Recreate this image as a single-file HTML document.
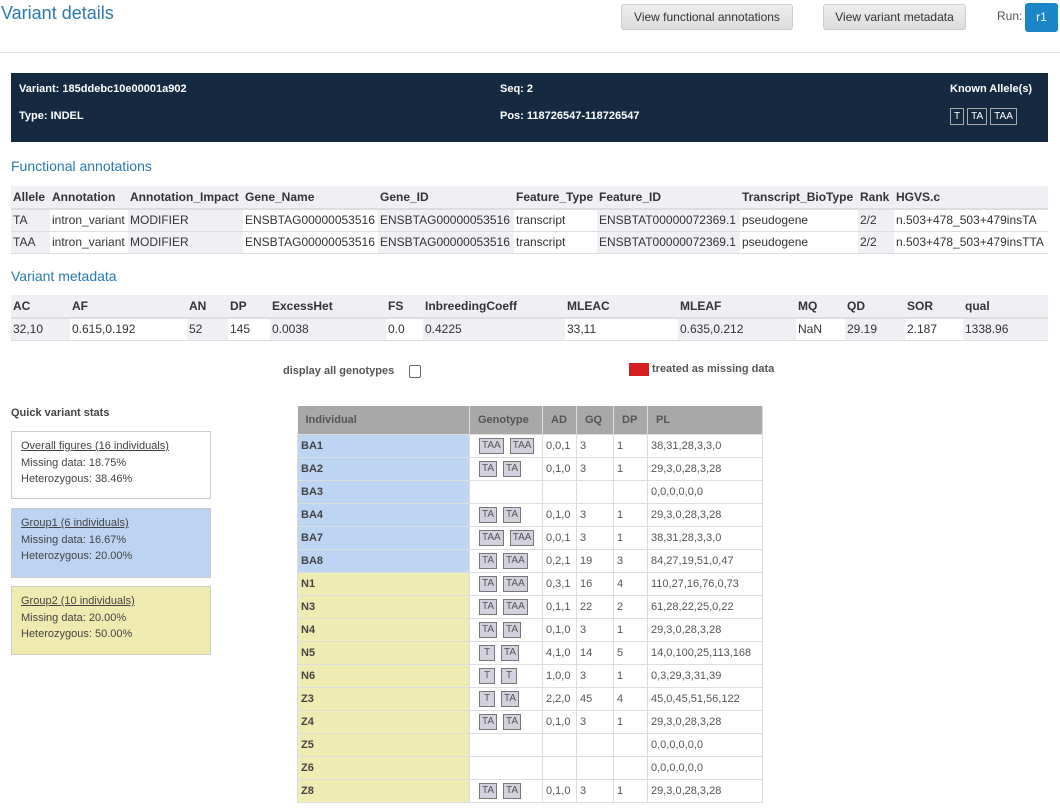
<!DOCTYPE html>
<html><head><meta charset="utf-8">
<style>
*{box-sizing:border-box;margin:0;padding:0}
body{width:1060px;height:809px;position:relative;background:#fff;font-family:"Liberation Sans",Arial,sans-serif;color:#333;overflow:hidden}
.a{position:absolute}
.btn{position:absolute;top:4px;height:26px;background:linear-gradient(#eee,#dcdcdc);border:1px solid #ccc;border-radius:3px;font-size:12px;color:#333;line-height:24px;text-align:center}
table{border-collapse:collapse;table-layout:fixed;position:absolute;font-size:12px}
td,th{white-space:nowrap;overflow:hidden;text-align:left;padding:0 2px}
.t1 th{font-weight:bold;height:23px;background:#efeff4;border-bottom:2px solid #ddd}
.t1 td{height:22px;border-bottom:1px solid #ddd}
.t1 td.g{background:#efeff4}
.dark{position:absolute;left:11px;top:73px;width:1037px;height:69px;background:#152a40;color:#fff;font-size:11px;font-weight:bold}
.dark span{position:absolute}
.al{display:inline-block;border:1px solid #aaa;height:17px;line-height:15px;padding:0 3px;margin-right:3px;font-weight:normal;font-size:10px}
h2{position:absolute;font-weight:normal;font-size:14px;color:#2a7ab0}
.box{position:absolute;left:11px;width:200px;border:1px solid #ccc;font-size:11px;color:#444;padding:6px 0 0 9px;line-height:16.5px}
.box u{color:#444}
.gt{position:absolute;left:297px;top:406px;width:465px;font-size:11px}
.gt th{background:#a8a8a8;color:#555;height:28px;font-weight:bold;padding-left:8px;border-right:1px solid #ddd;font-size:11px}
.gt td{height:23px;border:1px solid #ddd;color:#555;padding-left:3px;font-size:11px}
.gt td.i{font-weight:bold;color:#444;padding-left:3px}
.b td.i{background:#bdd5f2}
.y td.i{background:#efecb3}
.c{display:inline-block;height:16px;line-height:14px;border:1px solid #777;background:#d2d2de;font-size:10px;color:#555;padding:0 2px;margin-left:6px;vertical-align:middle;min-width:16px;text-align:center}
</style></head><body>
<div class="a" style="left:1px;top:3px;font-size:18px;color:#2a7ab0">Variant details</div>
<div class="btn" style="left:621px;width:172px">View functional annotations</div>
<div class="btn" style="left:823px;width:143px">View variant metadata</div>
<div class="a" style="left:997px;top:9px;font-size:12px;color:#555">Run:</div>
<div class="a" style="left:1025px;top:3px;width:33px;height:29px;background:#1a86c8;border-radius:3px;color:#fff;font-size:12px;text-align:center;line-height:29px">r1</div>
<div class="a" style="left:0;top:52px;width:1060px;height:1px;background:#e5e5e5"></div>

<div class="dark">
<span style="left:8px;top:10px">Variant: 185ddebc10e00001a902</span>
<span style="left:489px;top:10px">Seq: 2</span>
<span style="left:939px;top:10px">Known Allele(s)</span>
<span style="left:8px;top:37px">Type: INDEL</span>
<span style="left:489px;top:37px">Pos: 118726547-118726547</span>
<span style="left:939px;top:35px"><span class="al" style="position:static">T</span><span class="al" style="position:static">TA</span><span class="al" style="position:static">TAA</span></span>
</div>

<h2 style="left:11px;top:158px">Functional annotations</h2>
<table class="t1" style="left:11px;top:186px;width:1037px">
<colgroup><col style="width:39px"><col style="width:78px"><col style="width:115px"><col style="width:135px"><col style="width:136px"><col style="width:83px"><col style="width:143px"><col style="width:118px"><col style="width:36px"><col style="width:154px"></colgroup>
<tr><th>Allele</th><th>Annotation</th><th>Annotation_Impact</th><th>Gene_Name</th><th>Gene_ID</th><th>Feature_Type</th><th>Feature_ID</th><th>Transcript_BioType</th><th>Rank</th><th>HGVS.c</th></tr>
<tr><td class="g">TA</td><td>intron_variant</td><td class="g">MODIFIER</td><td>ENSBTAG00000053516</td><td class="g">ENSBTAG00000053516</td><td>transcript</td><td class="g">ENSBTAT00000072369.1</td><td>pseudogene</td><td class="g">2/2</td><td>n.503+478_503+479insTA</td></tr>
<tr><td class="g">TAA</td><td>intron_variant</td><td class="g">MODIFIER</td><td>ENSBTAG00000053516</td><td class="g">ENSBTAG00000053516</td><td>transcript</td><td class="g">ENSBTAT00000072369.1</td><td>pseudogene</td><td class="g">2/2</td><td>n.503+478_503+479insTTA</td></tr>
</table>

<h2 style="left:11px;top:268px">Variant metadata</h2>
<table class="t1" style="left:11px;top:295px;width:1037px">
<colgroup><col style="width:59px"><col style="width:117px"><col style="width:41px"><col style="width:42px"><col style="width:116px"><col style="width:37px"><col style="width:142px"><col style="width:113px"><col style="width:118px"><col style="width:49px"><col style="width:60px"><col style="width:58px"><col style="width:85px"></colgroup>
<tr><th>AC</th><th>AF</th><th>AN</th><th>DP</th><th>ExcessHet</th><th>FS</th><th>InbreedingCoeff</th><th>MLEAC</th><th>MLEAF</th><th>MQ</th><th>QD</th><th>SOR</th><th>qual</th></tr>
<tr><td class="g">32,10</td><td>0.615,0.192</td><td class="g">52</td><td>145</td><td class="g">0.0038</td><td>0.0</td><td class="g">0.4225</td><td>33,11</td><td class="g">0.635,0.212</td><td>NaN</td><td class="g">29.19</td><td>2.187</td><td class="g">1338.96</td></tr>
</table>

<div class="a" style="left:283px;top:365px;font-size:11px;font-weight:bold;color:#555">display all genotypes</div>
<div class="a" style="left:409px;top:365px;width:12px;height:13px;border:1px solid #666;border-radius:2px"></div>
<div class="a" style="left:629px;top:363px;width:20px;height:13px;background:#d42020"></div>
<div class="a" style="left:652px;top:363px;font-size:11px;font-weight:bold;color:#555">treated as missing data</div>

<div class="a" style="left:11px;top:407px;font-size:11px;font-weight:bold;color:#444">Quick variant stats</div>
<div class="box" style="top:431px;height:68px"><u>Overall figures (16 individuals)</u><br>Missing data: 18.75%<br>Heterozygous: 38.46%</div>
<div class="box" style="top:508px;height:70px;background:#bcd4f1"><u>Group1 (6 individuals)</u><br>Missing data: 16.67%<br>Heterozygous: 20.00%</div>
<div class="box" style="top:586px;height:69px;background:#efebb0"><u>Group2 (10 individuals)</u><br>Missing data: 20.00%<br>Heterozygous: 50.00%</div>

<table class="gt">
<colgroup><col style="width:172px"><col style="width:73px"><col style="width:34px"><col style="width:37px"><col style="width:34px"><col style="width:115px"></colgroup>
<tr><th>Individual</th><th>Genotype</th><th>AD</th><th>GQ</th><th>DP</th><th>PL</th></tr>
<tr class="b"><td class="i">BA1</td><td><span class="c">TAA</span><span class="c">TAA</span></td><td>0,0,1</td><td>3</td><td>1</td><td>38,31,28,3,3,0</td></tr>
<tr class="b"><td class="i">BA2</td><td><span class="c">TA</span><span class="c">TA</span></td><td>0,1,0</td><td>3</td><td>1</td><td>29,3,0,28,3,28</td></tr>
<tr class="b"><td class="i">BA3</td><td></td><td></td><td></td><td></td><td>0,0,0,0,0,0</td></tr>
<tr class="b"><td class="i">BA4</td><td><span class="c">TA</span><span class="c">TA</span></td><td>0,1,0</td><td>3</td><td>1</td><td>29,3,0,28,3,28</td></tr>
<tr class="b"><td class="i">BA7</td><td><span class="c">TAA</span><span class="c">TAA</span></td><td>0,0,1</td><td>3</td><td>1</td><td>38,31,28,3,3,0</td></tr>
<tr class="b"><td class="i">BA8</td><td><span class="c">TA</span><span class="c">TAA</span></td><td>0,2,1</td><td>19</td><td>3</td><td>84,27,19,51,0,47</td></tr>
<tr class="y"><td class="i">N1</td><td><span class="c">TA</span><span class="c">TAA</span></td><td>0,3,1</td><td>16</td><td>4</td><td>110,27,16,76,0,73</td></tr>
<tr class="y"><td class="i">N3</td><td><span class="c">TA</span><span class="c">TAA</span></td><td>0,1,1</td><td>22</td><td>2</td><td>61,28,22,25,0,22</td></tr>
<tr class="y"><td class="i">N4</td><td><span class="c">TA</span><span class="c">TA</span></td><td>0,1,0</td><td>3</td><td>1</td><td>29,3,0,28,3,28</td></tr>
<tr class="y"><td class="i">N5</td><td><span class="c">T</span><span class="c">TA</span></td><td>4,1,0</td><td>14</td><td>5</td><td>14,0,100,25,113,168</td></tr>
<tr class="y"><td class="i">N6</td><td><span class="c">T</span><span class="c">T</span></td><td>1,0,0</td><td>3</td><td>1</td><td>0,3,29,3,31,39</td></tr>
<tr class="y"><td class="i">Z3</td><td><span class="c">T</span><span class="c">TA</span></td><td>2,2,0</td><td>45</td><td>4</td><td>45,0,45,51,56,122</td></tr>
<tr class="y"><td class="i">Z4</td><td><span class="c">TA</span><span class="c">TA</span></td><td>0,1,0</td><td>3</td><td>1</td><td>29,3,0,28,3,28</td></tr>
<tr class="y"><td class="i">Z5</td><td></td><td></td><td></td><td></td><td>0,0,0,0,0,0</td></tr>
<tr class="y"><td class="i">Z6</td><td></td><td></td><td></td><td></td><td>0,0,0,0,0,0</td></tr>
<tr class="y"><td class="i">Z8</td><td><span class="c">TA</span><span class="c">TA</span></td><td>0,1,0</td><td>3</td><td>1</td><td>29,3,0,28,3,28</td></tr>
</table>
</body></html>
